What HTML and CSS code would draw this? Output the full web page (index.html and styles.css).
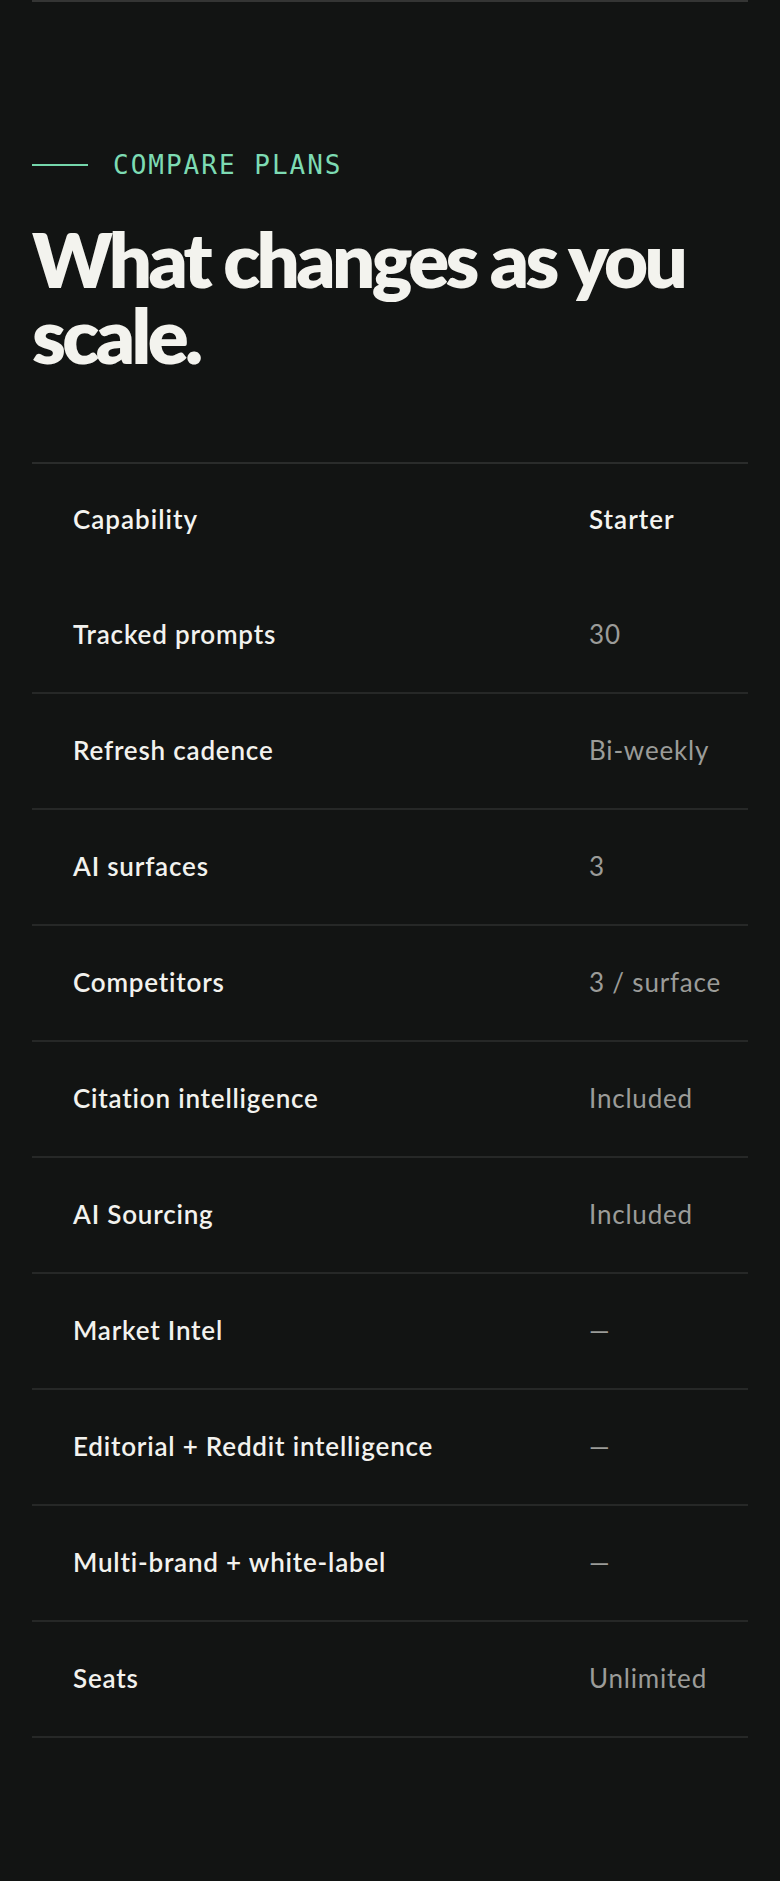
FILE: index.html
```html
<!DOCTYPE html>
<html lang="en">
<head>
<meta charset="utf-8">
<title>Compare plans</title>
<link rel="stylesheet" href="styles.css">
</head>
<body>
<main class="page">
  <div class="top-rule"></div>
  <section class="compare">
    <div class="eyebrow">
      <span class="eyebrow-line"></span>
      <span class="eyebrow-text">COMPARE PLANS</span>
    </div>
    <h2 class="title">What changes as you scale.</h2>
    <div class="table">
      <div class="row head">
        <div class="cell label">Capability</div>
        <div class="cell value">Starter</div>
      </div>
      <div class="row">
        <div class="cell label">Tracked prompts</div>
        <div class="cell value">30</div>
      </div>
      <div class="row">
        <div class="cell label">Refresh cadence</div>
        <div class="cell value">Bi-weekly</div>
      </div>
      <div class="row">
        <div class="cell label">AI surfaces</div>
        <div class="cell value">3</div>
      </div>
      <div class="row">
        <div class="cell label">Competitors</div>
        <div class="cell value">3 / surface</div>
      </div>
      <div class="row">
        <div class="cell label">Citation intelligence</div>
        <div class="cell value">Included</div>
      </div>
      <div class="row">
        <div class="cell label">AI Sourcing</div>
        <div class="cell value">Included</div>
      </div>
      <div class="row">
        <div class="cell label">Market Intel</div>
        <div class="cell value">—</div>
      </div>
      <div class="row">
        <div class="cell label">Editorial + Reddit intelligence</div>
        <div class="cell value">—</div>
      </div>
      <div class="row">
        <div class="cell label">Multi-brand + white-label</div>
        <div class="cell value">—</div>
      </div>
      <div class="row">
        <div class="cell label">Seats</div>
        <div class="cell value">Unlimited</div>
      </div>
    </div>
  </section>
</main>
</body>
</html>
```

FILE: styles.css
```css
* { box-sizing: border-box; }

html, body {
  margin: 0;
  padding: 0;
  background: #121413;
}

body {
  font-family: Lato, "Noto Sans", sans-serif;
  color: #f3f3ef;
}

.page {
  padding: 0 32px 143px;
}

.top-rule {
  height: 2px;
  background: #343534;
}

.compare {
  padding-top: 148px;
}

.eyebrow {
  display: flex;
  align-items: center;
  gap: 25px;
  height: 30px;
}

.eyebrow-line {
  width: 56px;
  height: 2px;
  background: #74d6ab;
}

.eyebrow-text {
  font-family: "DejaVu Sans Mono", "Liberation Mono", monospace;
  font-size: 26px;
  letter-spacing: 2px;
  color: #7ddbb3;
}

.title {
  margin: 41px 0 0;
  font-size: 76px;
  line-height: 76px;
  font-weight: 800;
  letter-spacing: -0.047em;
  color: #f3f3ee;
  max-width: 700px;
}

.table {
  margin-top: 89px;
  border-top: 2px solid #2a2c2b;
}

.row {
  display: grid;
  grid-template-columns: 1fr 159px;
  align-items: center;
  height: 116px;
  border-bottom: 2px solid #262827;
}

.row.head {
  height: 114px;
  border-bottom-color: transparent;
}

.cell {
  font-size: 26px;
  padding-bottom: 3px;
}

.label {
  padding-left: 41px;
  font-weight: 600;
  letter-spacing: 0.8px;
  color: #f2f2ee;
}

.value {
  color: #9b9c99;
  font-weight: 400;
  letter-spacing: 0.8px;
}

.head .label,
.head .value {
  font-weight: 600;
  letter-spacing: 1px;
  color: #f4f4f0;
}
```
